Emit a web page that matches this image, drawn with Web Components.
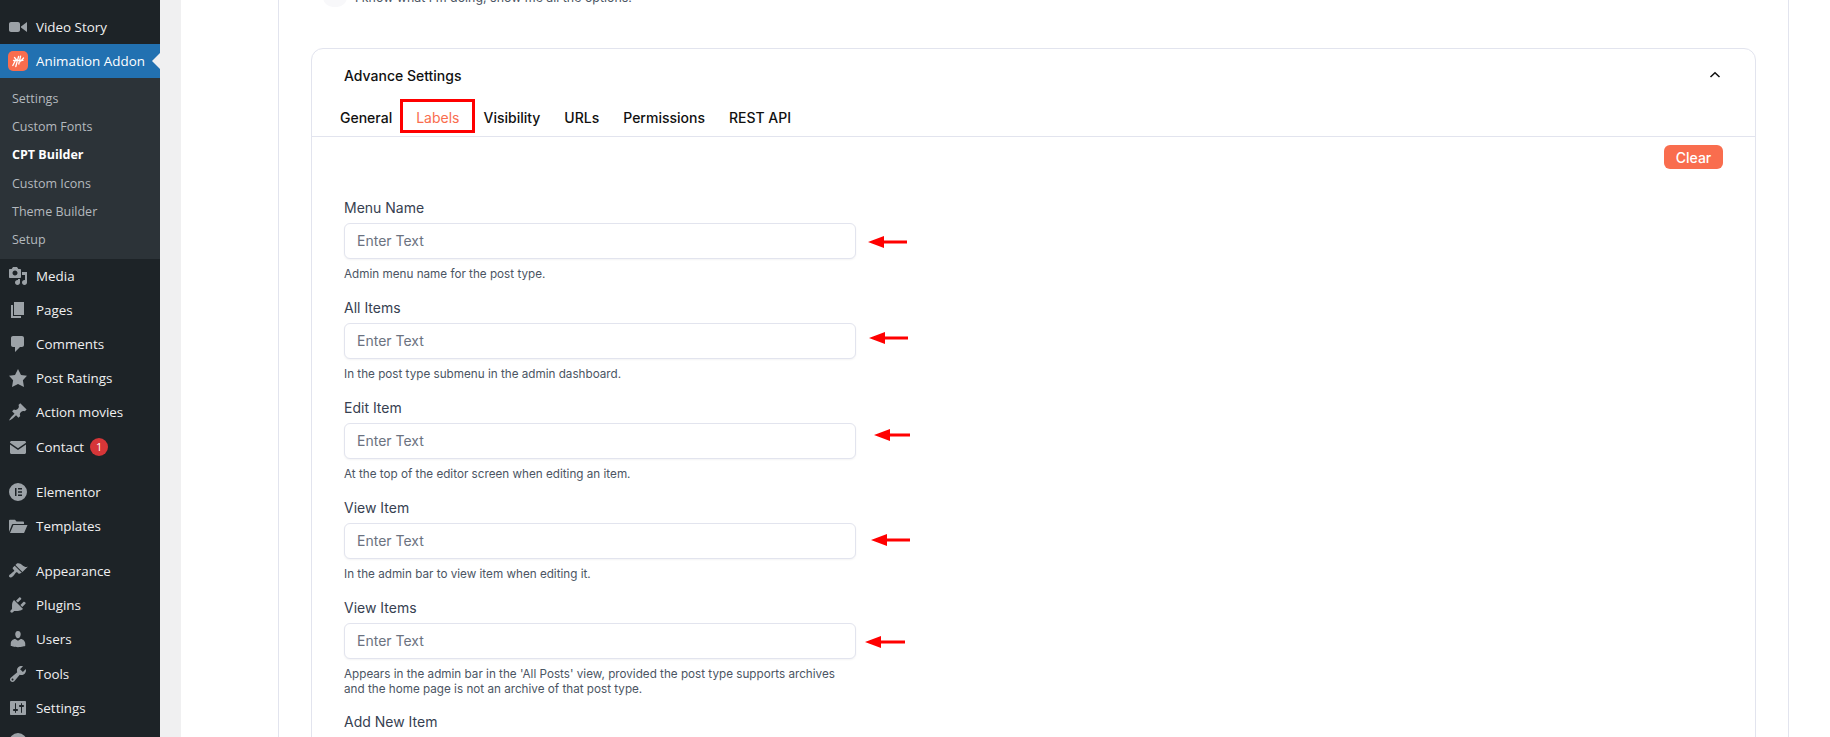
<!DOCTYPE html>
<html lang="en">
<head>
<meta charset="utf-8">
<title>CPT Builder</title>
<style>
html, body {
  margin: 0;
  height: 100%;
  overflow: hidden;
  background: #f0f0f1;
}
body {
  display: flex;
  width: 1830px;
  height: 737px;
  font-family: Inter, "Liberation Sans", sans-serif;
}
</style>
</head>
<body>
<wp-sidebar>
  <wp-item icon="video">Video Story</wp-item>
  <wp-item icon="logo" current>Animation Addon</wp-item>
  <wp-submenu>
    <wp-subitem>Settings</wp-subitem>
    <wp-subitem>Custom Fonts</wp-subitem>
    <wp-subitem active>CPT Builder</wp-subitem>
    <wp-subitem>Custom Icons</wp-subitem>
    <wp-subitem>Theme Builder</wp-subitem>
    <wp-subitem>Setup</wp-subitem>
  </wp-submenu>
  <wp-item icon="media">Media</wp-item>
  <wp-item icon="pages">Pages</wp-item>
  <wp-item icon="comments">Comments</wp-item>
  <wp-item icon="star">Post Ratings</wp-item>
  <wp-item icon="pin">Action movies</wp-item>
  <wp-item icon="mail" badge="1">Contact</wp-item>
  <wp-separator></wp-separator>
  <wp-item icon="elementor">Elementor</wp-item>
  <wp-item icon="folder">Templates</wp-item>
  <wp-separator></wp-separator>
  <wp-item icon="brush">Appearance</wp-item>
  <wp-item icon="plugin">Plugins</wp-item>
  <wp-item icon="users">Users</wp-item>
  <wp-item icon="tools">Tools</wp-item>
  <wp-item icon="settings">Settings</wp-item>
  <wp-item icon="elementor"></wp-item>
</wp-sidebar>
<builder-page>
  <advance-card title="Advance Settings">
    <text-field label="Menu Name" help="Admin menu name for the post type." arrow="12.5,39,1"></text-field>
    <text-field label="All Items" help="In the post type submenu in the admin dashboard." arrow="13,39,-3"></text-field>
    <text-field label="Edit Item" help="At the top of the editor screen when editing an item." arrow="18.5,36,-6"></text-field>
    <text-field label="View Item" help="In the admin bar to view item when editing it." arrow="15,39,-1"></text-field>
    <text-field label="View Items" help="Appears in the admin bar in the 'All Posts' view, provided the post type supports archives and the home page is not an archive of that post type." arrow="9.5,40,1"></text-field>
    <text-field label="Add New Item" help="At the top of the editor screen when adding a new item."></text-field>
  </advance-card>
</builder-page>

<script>
'use strict'
const ICONS = {
  video: 'M12 13V7c0-1.1-.9-2-2-2H3c-1.1 0-2 .9-2 2v6c0 1.1.9 2 2 2h7c1.1 0 2-.9 2-2zm1-2.5l6 4.5V5l-6 4.5v1z',
  media: 'M13 11V4c0-.55-.45-1-1-1h-1.67L9 1H5L3.67 3H2c-.55 0-1 .45-1 1v7c0 .55.45 1 1 1h10c.55 0 1-.45 1-1zM7 4.5c1.38 0 2.5 1.12 2.5 2.5S8.38 9.5 7 9.5 4.5 8.38 4.5 7 5.62 4.5 7 4.5zM14 6h5v10.5c0 1.38-1.12 2.5-2.5 2.5S14 17.88 14 16.5s1.12-2.5 2.5-2.5c.17 0 .34.02.5.05V9h-3V6zm-4 8.05V13h2v3.5c0 1.38-1.12 2.5-2.5 2.5S7 17.88 7 16.5 8.12 14 9.5 14c.17 0 .34.02.5.05z',
  pages: 'M6 15V2h10v13H6zm-1 1h8v2H3V5h2v11z',
  comments: 'M5 2h9c1.1 0 2 .9 2 2v7c0 1.1-.9 2-2 2h-2l-5 5v-5H5c-1.1 0-2-.9-2-2V4c0-1.1.9-2 2-2z',
  star: 'M10 1l3 6 6 .75-4.12 4.62L16 19l-6-3-6 3 1.13-6.63L1 7.75 7 7z',
  pin: 'M10.44 3.02l1.82-1.82 6.36 6.35-1.83 1.82c-1.05-.68-2.48-.57-3.41.36l-.75.75c-.92.93-1.04 2.35-.35 3.41l-1.83 1.82-2.41-2.41-2.8 2.79c-.42.42-3.38 2.71-3.8 2.29s1.86-3.39 2.28-3.81l2.79-2.79L4.1 9.36l1.83-1.82c1.05.69 2.48.57 3.4-.36l.75-.75c.93-.92 1.05-2.35.36-3.41z',
  mail: 'M2 5.5C2 4.7 2.7 4 3.5 4h13c.8 0 1.5.7 1.5 1.5v.3l-8 5.4-8-5.4v-.3zM2 7.6l8 5.3 8-5.3v7.9c0 .8-.7 1.5-1.5 1.5h-13C2.7 17 2 16.3 2 15.5V7.6z',
  elementor: 'M10 1a9 9 0 1 0 0 18 9 9 0 0 0 0-18zM7 6h1.5v8H7V6zm3 0h4v1.5h-4V6zm0 3.2h4v1.5h-4V9.2zm0 3.3h4V14h-4v-1.5z',
  folder: 'M1 4.5V16l3-7.5c.2-.4.5-.6 1-.6h11V6.5c0-.5-.4-.9-.9-.9H8.5L7 3.7H1.9c-.5 0-.9.3-.9.8zM5.4 9L2 17h13.4c.4 0 .7-.2.9-.6L19.5 9H5.4z',
  brush: 'M14.48 11.06L7.41 3.99l1.5-1.5c.5-.56 2.3-.47 3.51.32 1.21.8 1.43 1.28 2.91 2.1 1.18.64 2.45 1.26 4.45.85zm-.71.71L6.7 4.7 4.93 6.47c-.39.39-.39 1.02 0 1.41l1.06 1.06c.39.39.39 1.03 0 1.42-.6.6-1.43 1.11-2.21 1.69-.35.26-.7.53-1.01.84C1.43 13.23.4 14.93 1.4 16.01c1.01 1.01 2.7.02 4.04-1.37.31-.3.58-.65.84-1 .58-.78 1.09-1.61 1.69-2.21.39-.39 1.02-.39 1.41 0l1.06 1.06c.39.39 1.02.39 1.41 0z',
  plugin: 'M13.11 4.36L9.87 7.6 8 5.73l3.24-3.24c.35-.34 1.05-.2 1.56.32.52.51.66 1.21.31 1.55zm-8 1.77l.91-1.12 9.01 9.01-1.19.84c-.71.71-2.63 1.16-3.82 1.16H6.14L4.9 17.26c-.59.59-1.54.59-2.12 0-.59-.58-.59-1.53 0-2.12l1.24-1.24v-3.88c0-1.13.4-3.19 1.09-3.89zm7.26 3.97l3.24-3.24c.34-.35 1.04-.21 1.55.31.52.51.66 1.21.31 1.55l-3.24 3.25z',
  users: 'M10 9.25c-2.27 0-2.73-3.44-2.73-3.44C7 4.02 7.82 2 9.97 2c2.16 0 2.98 2.02 2.71 3.81 0 0-.41 3.44-2.68 3.44zm0 2.57L12.72 10c2.39 0 4.52 2.33 4.52 4.53v2.49s-3.65 1.13-7.24 1.13c-3.65 0-7.24-1.13-7.24-1.13v-2.49c0-2.25 1.94-4.48 4.47-4.48z',
  tools: 'M16.68 9.77c-1.34 1.34-3.3 1.67-4.95.99l-5.41 6.52c-.99.99-2.59.99-3.58 0s-.99-2.59 0-3.57l6.52-5.42c-.68-1.65-.35-3.61.99-4.95 1.28-1.28 3.12-1.62 4.72-1.06l-2.89 2.89 2.82 2.82 2.86-2.87c.53 1.58.18 3.39-1.08 4.65zM3.81 16.21c.4.39 1.04.39 1.43 0 .4-.4.4-1.04 0-1.43-.39-.4-1.03-.4-1.43 0-.39.39-.39 1.03 0 1.43z',
  settings: 'M18 16V4c0-.55-.45-1-1-1H3c-.55 0-1 .45-1 1v12c0 .55.45 1 1 1h14c.55 0 1-.45 1-1zM8 11h1c.55 0 1 .45 1 1s-.45 1-1 1H8v1.5c0 .28-.22.5-.5.5s-.5-.22-.5-.5V13H6c-.55 0-1-.45-1-1s.45-1 1-1h1V5.5c0-.28.22-.5.5-.5s.5.22.5.5V11zm5-2h-1c-.55 0-1-.45-1-1s.45-1 1-1h1V5.5c0-.28.22-.5.5-.5s.5.22.5.5V7h1c.55 0 1 .45 1 1s-.45 1-1 1h-1v5.5c0 .28-.22.5-.5.5s-.5-.22-.5-.5V9z'
}
const LOGO = `<svg width="20" height="20" viewBox="0 0 20 20">
  <rect width="20" height="20" rx="5" fill="#f96d4e"/>
  <g stroke="#fff" stroke-width="1.3" stroke-linecap="round">
    <path d="M4.8 14.5L8 8.5M7.8 15.5l2.8-10.2M10.8 13l1.8-7.8M12.5 10.5l3-3.5M5.5 9.5l9.500-.2M6.500 6.500l2.500 3"/>
  </g>
</svg>`

class WpSidebar extends HTMLElement {
  constructor() {
    super()
    this.attachShadow({mode: 'open'}).innerHTML = `
<style>
:host {
  display: flex;
  flex-direction: column;
  flex: none;
  width: 160px;
  height: 737px;
  overflow: hidden;
  padding-top: 10px;
  box-sizing: border-box;
  background: #1d2327;
  font-family: "Open Sans", "Noto Sans", sans-serif;
  font-size: 13.4px;
  color: #f0f0f1;
}
</style>
<slot></slot>`
  }
}

class WpItem extends HTMLElement {
  constructor() {
    super()
    const name = this.getAttribute('icon')
    const glyph = name === 'logo' ? LOGO
      : `<svg width="20" height="20" viewBox="0 0 20 20"><path fill="#9ca2a7" fill-rule="evenodd" d="${ICONS[name]}"/></svg>`
    const badge = this.getAttribute('badge')
    this.attachShadow({mode: 'open'}).innerHTML = `
<style>
:host {
  display: flex;
  flex: none;
  align-items: center;
  position: relative;
  height: 34.2px;
  box-sizing: border-box;
  padding-left: 8px;
  gap: 8px;
}
:host([current]) {
  background: #2271b1;
  color: #fff;
}
:host([current])::after {
  content: '';
  position: absolute;
  right: 0;
  top: 50%;
  margin-top: -8px;
  border: 8px solid transparent;
  border-right-color: #f0f0f1;
  border-left: none;
}
svg { display: block; flex: none; }
b {
  display: grid;
  place-items: center;
  width: 18px;
  height: 18px;
  margin-left: -2px;
  border-radius: 50%;
  background: #d63638;
  color: #fff;
  font-size: 11px;
  font-weight: 400;
}
</style>
${glyph}<span><slot></slot></span>${badge ? `<b>${badge}</b>` : ''}`
  }
}

class WpSubmenu extends HTMLElement {
  constructor() {
    super()
    this.attachShadow({mode: 'open'}).innerHTML = `
<style>
:host {
  display: flex;
  flex: none;
  flex-direction: column;
  padding: 6px 0 5px;
  background: #2c3338;
}
</style>
<slot></slot>`
  }
}

class WpSubitem extends HTMLElement {
  constructor() {
    super()
    this.attachShadow({mode: 'open'}).innerHTML = `
<style>
:host {
  display: flex;
  align-items: center;
  height: 28.2px;
  padding-left: 12px;
  font-size: 12.5px;
  color: #b4b9be;
}
:host([active]) {
  color: #fff;
  font-weight: 700;
}
</style>
<slot></slot>`
  }
}

class WpSeparator extends HTMLElement {
  constructor() {
    super()
    this.attachShadow({mode: 'open'}).innerHTML = `
<style>
:host { display: block; flex: none; height: 11px; }
</style>`
  }
}

class BuilderPage extends HTMLElement {
  constructor() {
    super()
    this.attachShadow({mode: 'open'}).innerHTML = `
<style>
:host {
  display: block;
  flex: none;
  width: 1649px;
  margin-left: 21px;
  height: 737px;
  overflow: hidden;
  box-sizing: border-box;
  padding: 0 41px 0 97px;
  background: #fff;
}
.sheet {
  height: 800px;
  box-sizing: border-box;
  border: solid #e2e4ee;
  border-width: 0 1px;
  padding: 0 32px;
}
.expert {
  display: flex;
  align-items: center;
  gap: 8px;
  height: 18px;
  margin: -12px 0 42px;
  padding-left: 12px;
  font-size: 12.4px;
  color: #4b5563;
}
.expert i {
  width: 24px;
  height: 20px;
  border-radius: 10px;
  background: #f8f8fa;
}
</style>
<div class="sheet">
  <div class="expert"><i></i>I know what I'm doing, show me all the options.</div>
  <slot></slot>
</div>`
  }
}

class AdvanceCard extends HTMLElement {
  constructor() {
    super()
    const tabs = ['General', 'Labels', 'Visibility', 'URLs', 'Permissions', 'REST API']
    this.attachShadow({mode: 'open'}).innerHTML = `
<style>
:host {
  display: block;
  box-sizing: border-box;
  height: 900px;
  border: 1px solid #e2e4ee;
  border-radius: 12px;
  color: #111;
}
header {
  display: flex;
  justify-content: space-between;
  align-items: center;
  height: 52px;
  padding: 0 34px 0 32px;
  font-size: 14px;
  font-weight: 500;
}
nav {
  display: flex;
  height: 35px;
  padding-left: 28px;
  gap: 24px;
  border-bottom: 1px solid #e2e4ee;
  font-size: 14px;
  font-weight: 500;
}
nav span {
  position: relative;
  line-height: 34px;
}
nav .on { color: #f96d4e; font-weight: 400; }
nav .on::after {
  content: '';
  position: absolute;
  left: -16px;
  right: -16px;
  top: -2px;
  bottom: 3px;
  border: 3px solid #f00;
}
.tools {
  display: flex;
  justify-content: flex-end;
  padding: 8px 32px 0 0;
}
button {
  height: 24px;
  width: 59px;
  padding: 0;
  border: 0;
  border-radius: 6px;
  background: #f96d4e;
  color: #fff;
  font: 500 14px Inter, sans-serif;
}
.fields {
  display: flex;
  flex-direction: column;
  padding: 30px 32px 0;
}
</style>
<header>
  <span>${this.getAttribute('title')}</span>
  <svg width="12" height="8" viewBox="0 0 12 8"><path d="M1.5 6L6 1.7 10.5 6" fill="none" stroke="#111" stroke-width="1.5"/></svg>
</header>
<nav>${tabs.map(t => `<span class="${t === 'Labels' ? 'on' : ''}">${t}</span>`).join('')}</nav>
<div class="tools"><button>Clear</button></div>
<div class="fields"><slot></slot></div>`
    this.removeAttribute('title')
  }
}

class TextField extends HTMLElement {
  constructor() {
    super()
    // arrow="gap from the input, length, vertical nudge"
    const arrow = this.getAttribute('arrow')
    let mark = ''
    if(arrow) {
      const [gap, len, dy] = arrow.split(',').map(Number)
      mark = `<svg style="left:calc(100% + ${gap}px);top:${11 + dy}px" width="${len}" height="14" viewBox="0 0 ${len} 14"><path d="M0 7L16 1v4.5h${len - 16}v3H16V13z" fill="#f00"/></svg>`
    }
    this.attachShadow({mode: 'open'}).innerHTML = `
<style>
:host {
  display: block;
  width: 511.5px;
  min-height: 100px;
  font-size: 14px;
  color: #374151;
}
label {
  display: block;
  height: 17px;
  line-height: 17px;
  margin-bottom: 7px;
}
.box {
  position: relative;
  height: 36px;
}
input {
  width: 100%;
  height: 100%;
  box-sizing: border-box;
  padding: 0 12px 1px;
  border: 1px solid #e2e4ee;
  border-radius: 6px;
  box-shadow: 0 1px 2px rgba(16, 24, 40, .05);
  font: 14px Inter, sans-serif;
  color: #374151;
  outline: none;
}
input::placeholder { color: #6b7280; opacity: 1; }
svg { position: absolute; }
p {
  margin: 8px 0 0;
  padding-bottom: 16px;
  font-size: 11.7px;
  line-height: 15px;
  color: #4b5563;
}
</style>
<label>${this.getAttribute('label')}</label>
<div class="box">
  <input type="text" placeholder="Enter Text">
  ${mark}
</div>
<p>${this.getAttribute('help')}</p>`
  }
}

customElements.define('wp-sidebar', WpSidebar)
customElements.define('wp-item', WpItem)
customElements.define('wp-submenu', WpSubmenu)
customElements.define('wp-subitem', WpSubitem)
customElements.define('wp-separator', WpSeparator)
customElements.define('builder-page', BuilderPage)
customElements.define('advance-card', AdvanceCard)
customElements.define('text-field', TextField)
</script>
</body>
</html>
